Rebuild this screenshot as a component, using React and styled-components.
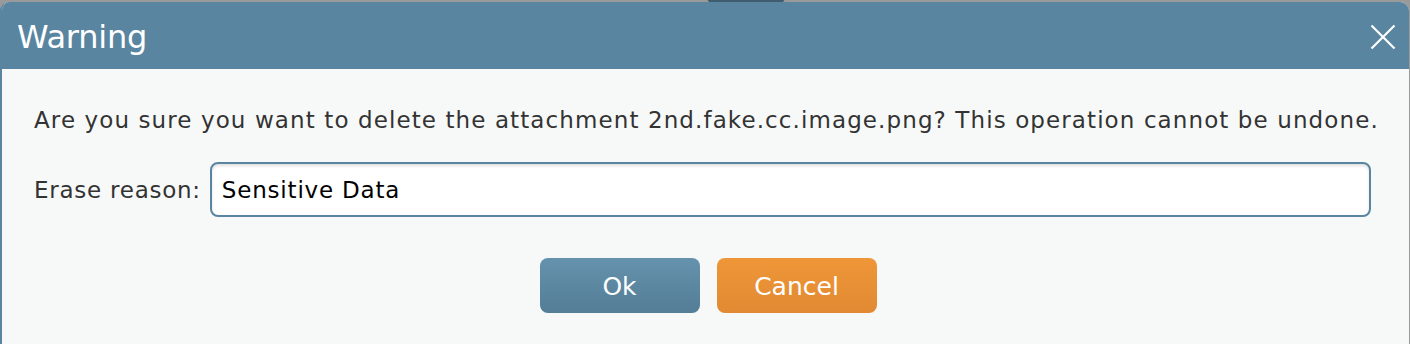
import React from 'react';
import styled, { createGlobalStyle } from 'styled-components';

const GlobalStyle = createGlobalStyle`
  html, body {
    margin: 0;
    padding: 0;
    background: #9a9a9a;
    overflow: hidden;
  }
  body {
    font-family: "DejaVu Sans", Verdana, sans-serif;
  }
`;

const Backdrop = styled.div`
  width: 1410px;
  height: 344px;
  padding-top: 2px;
  box-sizing: border-box;
  position: relative;
  overflow: hidden;
`;

const BackdropPill = styled.div`
  position: absolute;
  top: -10px;
  left: 707px;
  width: 78px;
  height: 14px;
  border-radius: 7px;
  background: #3f5d6e;
`;

const Dialog = styled.div`
  position: relative;
  width: 1409px;
  height: 350px;
  background: #f7f9f9;
  border-left: 2px solid #5985a0;
  border-radius: 9px 9px 0 0;
  box-sizing: border-box;
  overflow: hidden;
`;

const Header = styled.div`
  height: 67px;
  background: #5985a0;
  display: flex;
  align-items: center;
  justify-content: space-between;
  padding: 2px 13px 0 17px;
  margin-left: -2px;
  box-sizing: border-box;
`;

const Title = styled.h1`
  margin: 0;
  color: #ffffff;
  font-size: 32px;
  font-weight: normal;
  letter-spacing: -0.2px;
`;

const CloseButton = styled.button`
  border: none;
  background: none;
  padding: 0;
  width: 26px;
  height: 26px;
  display: flex;
  cursor: pointer;
`;

const Body = styled.div`
  padding: 36px 32px 0 32px;
  display: flex;
  flex-direction: column;
`;

const Message = styled.p`
  margin: 0;
  color: #333333;
  font-size: 23px;
  line-height: 30px;
  letter-spacing: 1.1px;
  white-space: nowrap;
`;

const Field = styled.div`
  display: flex;
  align-items: center;
  gap: 9px;
  margin-top: 27px;
  padding-right: 6px;
`;

const Label = styled.label`
  color: #333333;
  font-size: 23px;
  letter-spacing: 0.75px;
  white-space: nowrap;
`;

const Input = styled.input`
  flex: 1;
  height: 55px;
  box-sizing: border-box;
  border: 2px solid #5985a0;
  border-radius: 8px;
  background: #ffffff;
  box-shadow: inset 0 2px 3px rgba(0, 0, 0, 0.12);
  padding: 0 10px;
  font-family: "DejaVu Sans", Verdana, sans-serif;
  font-size: 23px;
  letter-spacing: 0.8px;
  color: #000000;
  outline: none;
`;

const Actions = styled.div`
  display: flex;
  justify-content: center;
  gap: 17px;
  margin-top: 41px;
  padding-left: 5px;
`;

const Button = styled.button`
  width: 160px;
  height: 55px;
  border: none;
  border-radius: 8px;
  color: #ffffff;
  font-family: "DejaVu Sans", Verdana, sans-serif;
  font-size: 25px;
  padding: 2px 0 0;
  cursor: pointer;
  background: ${(p) =>
    p.$variant === 'cancel'
      ? 'linear-gradient(to bottom, #ef9638, #e18a33)'
      : 'linear-gradient(to bottom, #6592ad, #547d96)'};
`;

const CloseIcon = () => (
  <svg width="26" height="26" viewBox="0 0 26 26">
    <path d="M1.5 1.5 L24.5 24.5 M24.5 1.5 L1.5 24.5" stroke="#ffffff" strokeWidth="2.2" />
  </svg>
);

const App = () => (
  <>
    <GlobalStyle />
    <Backdrop>
      <BackdropPill />
      <Dialog>
        <Header>
          <Title>Warning</Title>
          <CloseButton aria-label="Close">
            <CloseIcon />
          </CloseButton>
        </Header>
        <Body>
          <Message>
            Are you sure you want to delete the attachment 2nd.fake.cc.image.png? This
            operation cannot be undone.
          </Message>
          <Field>
            <Label htmlFor="erase-reason">Erase reason:</Label>
            <Input id="erase-reason" defaultValue="Sensitive Data" />
          </Field>
          <Actions>
            <Button>Ok</Button>
            <Button $variant="cancel">Cancel</Button>
          </Actions>
        </Body>
      </Dialog>
    </Backdrop>
  </>
);

export default App;
